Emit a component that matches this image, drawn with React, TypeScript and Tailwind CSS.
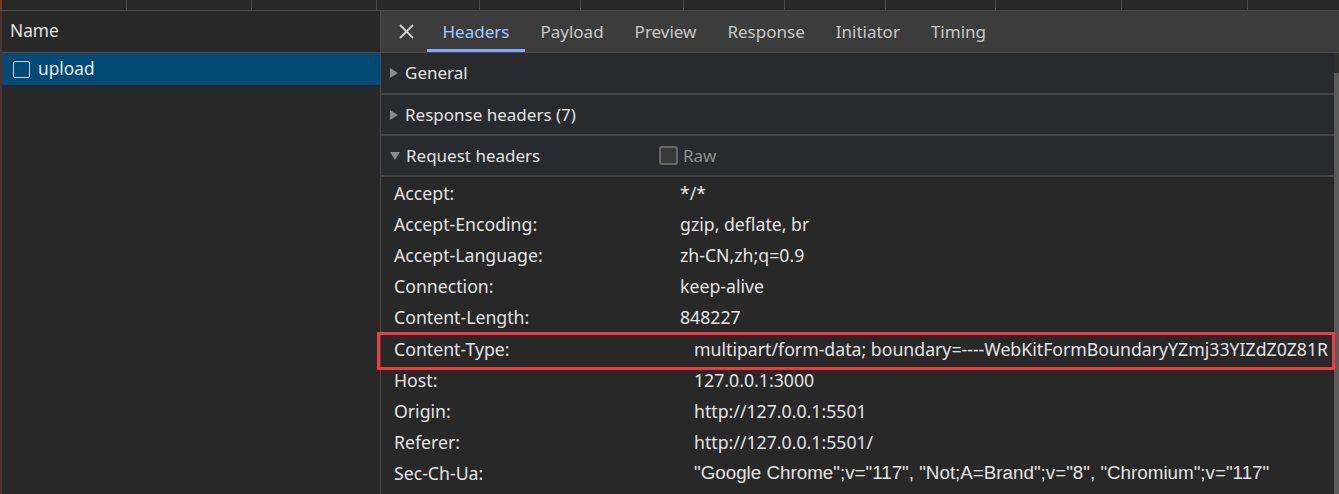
import React from "react";

const rows: { k: string; v: string; off: boolean; arial?: boolean; boxed?: boolean }[] = [
  { k: "Accept:", v: "*/*", off: false },
  { k: "Accept-Encoding:", v: "gzip, deflate, br", off: false },
  { k: "Accept-Language:", v: "zh-CN,zh;q=0.9", off: false },
  { k: "Connection:", v: "keep-alive", off: false },
  { k: "Content-Length:", v: "848227", off: false },
  { k: "Content-Type:", v: "multipart/form-data; boundary=----WebKitFormBoundaryYZmj33YIZdZ0Z81R", off: true, boxed: true },
  { k: "Host:", v: "127.0.0.1:3000", off: true },
  { k: "Origin:", v: "http://127.0.0.1:5501", off: true },
  { k: "Referer:", v: "http://127.0.0.1:5501/", off: true },
  { k: "Sec-Ch-Ua:", v: "\"Google Chrome\";v=\"117\", \"Not;A=Brand\";v=\"8\", \"Chromium\";v=\"117\"", off: true, arial: true },
];

function TriRight() {
  return (
    <svg width="10" height="12" viewBox="0 0 10 12" className="shrink-0">
      <path d="M1 1 L9 6 L1 11 Z" fill="#8a8a8a" />
    </svg>
  );
}
function TriDown() {
  return (
    <svg width="12" height="10" viewBox="0 0 12 10" className="shrink-0">
      <path d="M1 1 L11 1 L6 9 Z" fill="#8a8a8a" />
    </svg>
  );
}

export default function App() {
  const tabs = ["Headers", "Payload", "Preview", "Response", "Initiator", "Timing"];
  return (
    <div
      className="w-[1339px] h-[494px] overflow-hidden bg-[#282828] flex flex-col text-[17.7px] text-[#e3e3e3]"
      style={{ fontFamily: '"Noto Sans", "Open Sans", sans-serif' }}
    >
      {/* top strip */}
      <div className="h-[11px] shrink-0 flex border-b border-[#4a4a4a] bg-[#282828]">
        <div className="w-[2px] bg-[#6b3a2a]" />
        {[125, 125, 125, 103, 101, 103, 101, 101, 110, 126, 126].map((w, i) => (
          <div key={i} className="h-full border-r border-[#4a4a4a]" style={{ width: w }} />
        ))}
      </div>
      <div className="flex flex-1 min-h-0">
        {/* left panel */}
        <div className="w-[381px] shrink-0 flex border-r border-[#4a4a4a] text-[17.3px]">
          <div className="w-[2px] bg-[#4a3430]" />
          <div className="flex-1 flex flex-col">
            <div className="h-[42px] flex items-center pl-[8px] pb-[1px] border-b border-[#4a4a4a] text-[#e3e3e3]">
              Name
            </div>
            <div className="h-[32px] flex items-center bg-[#004a77] pl-[11px] gap-[8px]">
              <span className="w-[17px] h-[17px] border-[1.5px] border-[#c8d3dc] rounded-[2px]" />
              <span className="text-[#e8eef3]">upload</span>
            </div>
          </div>
        </div>
        {/* right panel */}
        <div className="flex-1 flex flex-col min-w-0">
          <div className="h-[42px] shrink-0 bg-[#3c3c3c] flex items-stretch border-b border-[#4a4a4a] pl-[17px] text-[17px]">
            <div className="flex items-center pr-[12px]">
              <svg width="17" height="17" viewBox="0 0 17 17">
                <path d="M2 2 L15 15 M15 2 L2 15" stroke="#d0d0d0" strokeWidth="1.8" />
              </svg>
            </div>
            {tabs.map((t, i) => (
              <div
                key={t}
                className={
                  i === 0
                    ? "flex items-center px-[15.5px] text-[#a8c7fa] border-b-[3px] border-[#7cacf8] pt-[3px]"
                    : "flex items-center px-[15.5px] text-[#c7c7c7]"
                }
              >
                {t}
              </div>
            ))}
          </div>
          <div className="flex flex-1 min-h-0">
            <div className="flex-1 flex flex-col min-w-0">
              <div className="h-[42px] shrink-0 flex items-center gap-[6px] pl-[8px] bg-[#292a2d] border-b-2 border-[#444] text-[17px]">
                <TriRight />
                <span>General</span>
              </div>
              <div className="h-[41px] shrink-0 flex items-center gap-[6px] pl-[8px] bg-[#292a2d] border-b-2 border-[#444] text-[17px]">
                <TriRight />
                <span>Response headers (7)</span>
              </div>
              <div className="h-[41px] shrink-0 flex items-center pl-[8px] bg-[#292a2d] border-b-2 border-[#444] text-[17px]">
                <div className="w-[270px] flex items-center gap-[5px]">
                  <TriDown />
                  <span>Request headers</span>
                </div>
                <span className="w-[19px] h-[19px] rounded-[3px] border-2 border-[#666] bg-[#3a3a3a] mr-[5px]" />
                <span className="text-[#8f8f8f]">Raw</span>
              </div>
              <div className="flex flex-col pt-[1px]">
                {rows.map((r) => (
                  <div
                    key={r.k}
                    className={
                      r.boxed
                        ? "h-[38px] shrink-0 flex items-center border-[3px] border-[#f23a3a] -ml-[4px] -mr-[1px] pl-[14px] pb-[4px] -mt-[1px] -mb-[5px] relative"
                        : "h-[31px] shrink-0 flex items-center pl-[13px]"
                    }
                  >
                    <div className={r.off ? "w-[300px] shrink-0" : "w-[286px] shrink-0"}>{r.k}</div>
                    <div
                      className={r.arial ? "whitespace-nowrap text-[18.8px]" : "whitespace-nowrap"}
                      style={r.arial ? { fontFamily: '"Liberation Sans", Arial, sans-serif' } : undefined}
                    >
                      {r.v}
                    </div>
                  </div>
                ))}
              </div>
            </div>
            <div className="w-[5px] shrink-0 flex flex-col bg-[#2f2f2f]">
              <div className="h-[20px]" />
              <div className="flex-1 bg-[#5a5a5a]" />
            </div>
          </div>
        </div>
      </div>
    </div>
  );
}
